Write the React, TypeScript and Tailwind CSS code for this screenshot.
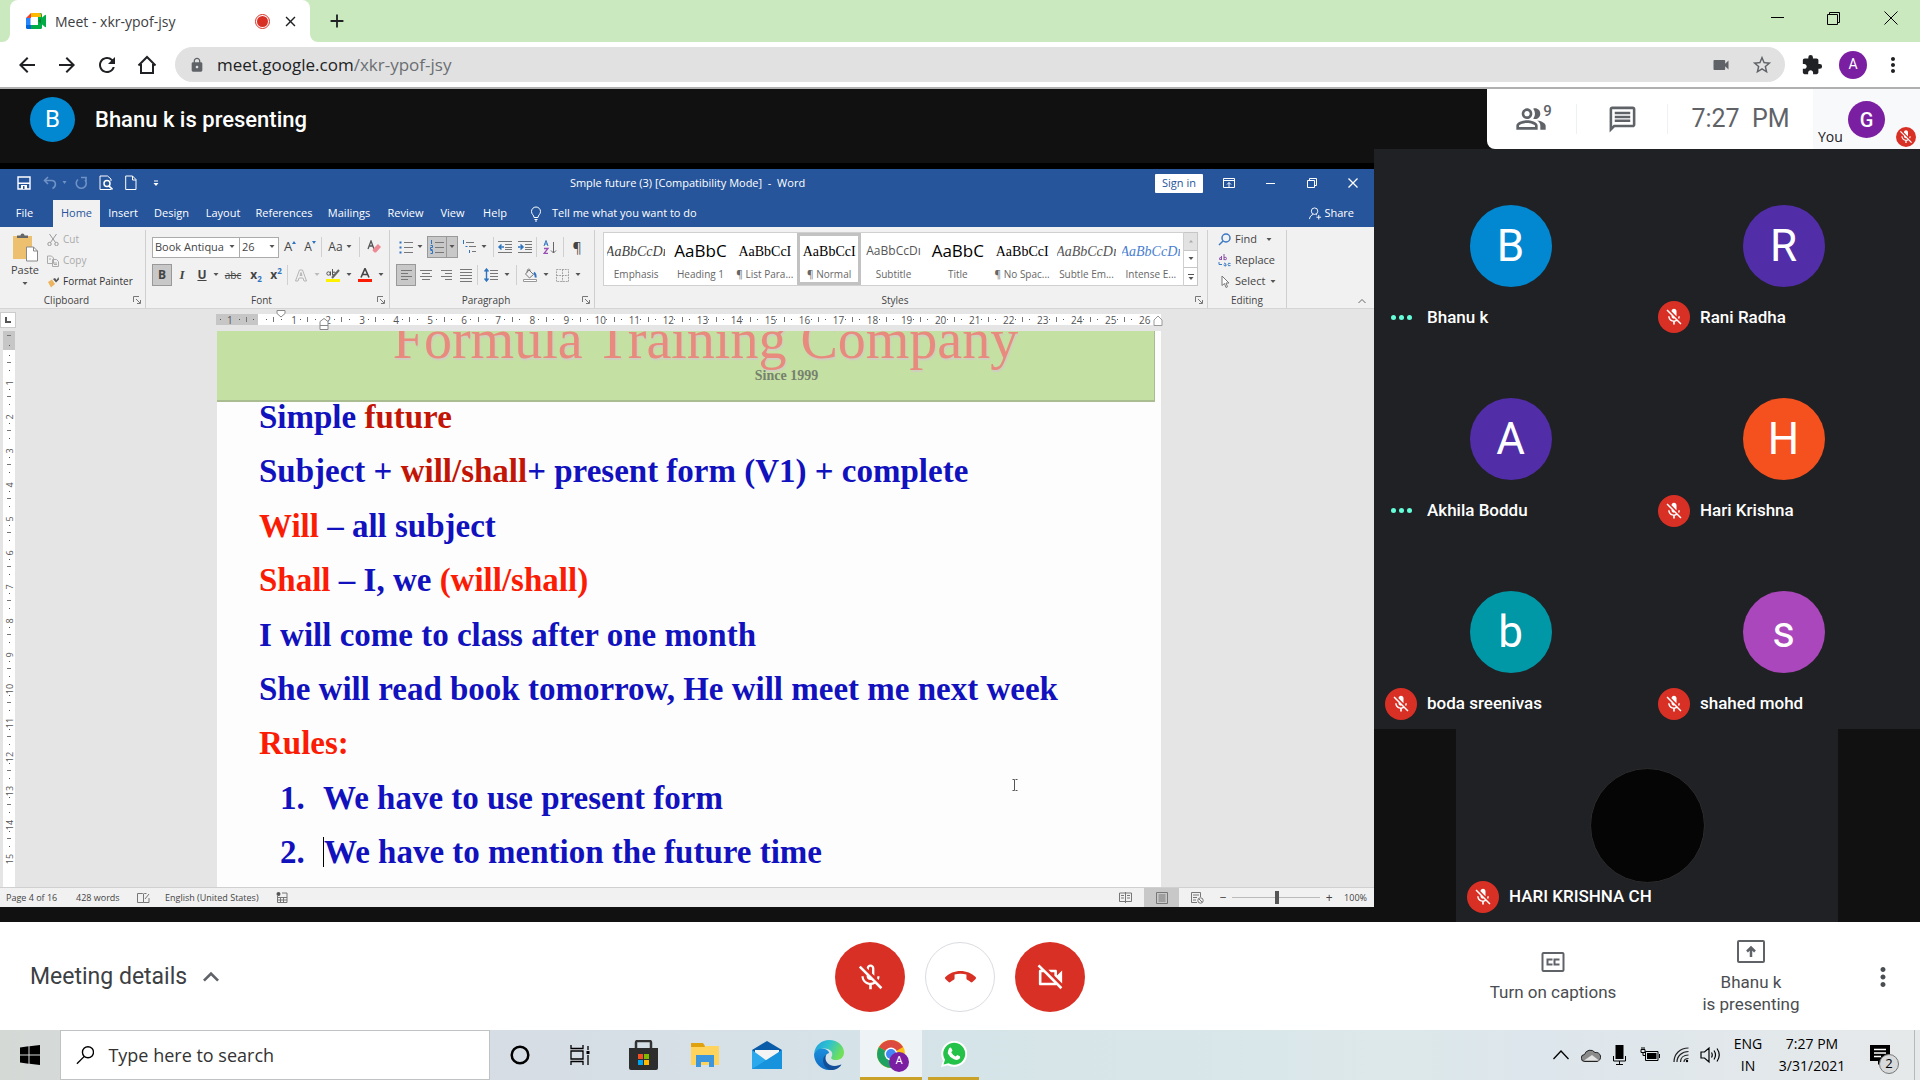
import React from "react";
import {
  MdArrowBack, MdArrowForward, MdRefresh, MdLock, MdVideocam, MdStarBorder, MdExtension, MdMoreVert, MdClose, MdAdd,
  MdOutlinePeopleAlt, MdOutlineMessage, MdMicOff, MdOutlineMicOff, MdCallEnd, MdOutlineVideocamOff, MdKeyboardArrowUp,
} from "react-icons/md";

const ui = "font-['Open_Sans','Noto_Sans',sans-serif]";
const roboto = "font-['Roboto',sans-serif]";

/* ---------- Browser ---------- */

function MeetLogo() {
  return (
    <svg viewBox="0 0 20 16" className="h-4 w-5">
      <path d="M5 0h10v4H5z" fill="#ffba00" />
      <path d="M5 0v5H0z" fill="#ea4335" />
      <path d="M0 5h4.500v7H0z" fill="#2684fc" />
      <path d="M0 12h5v4H1.500Q0 16 0 14.500z" fill="#0066da" />
      <path d="M5 12h10v4H5z" fill="#00ac47" />
      <path d="M13 0h1.500Q16 0 16 1.500V14.500Q16 16 14.500 16H13l-1-4V4z" fill="#00ac47" />
      <path d="M5 0h8q2 0 2 2v2H5z" fill="#ffba00" />
      <path d="M12 8l4-3.500v7z" fill="#00832d" />
      <path d="M15 5.500 19 2q1-.5 1 .5v11q0 1-1 .5l-4-3.500z" fill="#00ac47" />
      <path d="M5 4.500h7v7.500H5z" fill="#fff" />
    </svg>
  );
}

function Browser() {
  return (
    <header className={`${ui} shrink-0`}>
      <div className="flex h-[42px] items-end justify-between bg-[#cae9bf]">
        <div className="flex items-end">
          <div className="h-2 w-[10px] bg-white">
            <div className="size-full rounded-br-lg bg-[#cae9bf]" />
          </div>
          <div className="flex h-[42px] w-[300px] items-center rounded-t-lg bg-white pr-[11px] pl-4">
            <MeetLogo />
            <span className="ml-[9px] flex-1 text-[14px] whitespace-nowrap text-[#3c4043]">Meet - xkr-ypof-jsy</span>
            <span className="mr-[12px] flex size-[15px] items-center justify-center rounded-full border border-[#d93025]">
              <span className="size-[11px] rounded-full bg-[#d93025]" />
            </span>
            <button aria-label="Close tab"><MdClose className="size-[17px] text-[#202124]" /></button>
          </div>
          <div className="h-2 w-[10px] bg-white">
            <div className="size-full rounded-bl-lg bg-[#cae9bf]" />
          </div>
          <button aria-label="New tab" className="mb-[10px] ml-[6px]"><MdAdd className="size-[22px] text-[#202124]" /></button>
        </div>
        <div className="flex self-start">
          <button aria-label="Minimize" className="flex h-9 w-14 items-center justify-center"><svg viewBox="0 0 14 14" className="size-[14px]"><path d="M0 6.500h13" stroke="#000" /></svg></button>
          <button aria-label="Restore" className="flex h-9 w-14 items-center justify-center"><svg viewBox="0 0 14 14" className="size-[14px]" fill="none" stroke="#000"><path d="M.5 3.500h10v10H.5zM2.500 3.500v-2h10v10h-2" /></svg></button>
          <button aria-label="Close" className="flex h-9 w-[58px] items-center justify-center"><svg viewBox="0 0 14 14" className="size-[14px]"><path d="m.5.5 13 13m0-13-13 13" stroke="#000" /></svg></button>
        </div>
      </div>
      <div className="flex h-[47px] items-center border-b-2 border-[#b0b0b0] bg-white pr-[15px] pl-[15px] text-[#202124]">
        <button aria-label="Back" className="mr-4"><MdArrowBack className="size-6" /></button>
        <button aria-label="Forward" className="mr-4"><MdArrowForward className="size-6" /></button>
        <button aria-label="Reload" className="mr-4"><MdRefresh className="size-6" /></button>
        <button aria-label="Home" className="mr-4">
          <svg viewBox="0 0 24 24" className="size-6" fill="none" stroke="#202124" strokeWidth="2"><path d="M3.500 12.500 12 4l8.500 8.500M6 11v9h12v-9" /></svg>
        </button>
        <div className="flex h-[35px] flex-1 items-center rounded-full bg-[#e1e1e1] pr-3 pl-[14px]">
          <MdLock className="size-4 text-[#5f6368]" />
          <button className="ml-3 flex-1 text-left text-[17px] text-[#202124]">meet.google.com<span className="text-[#6b6f73]">/xkr-ypof-jsy</span></button>
          <MdVideocam className="mr-5 size-[20px] text-[#5f6368]" />
          <button aria-label="Bookmark"><MdStarBorder className="size-[22px] text-[#5f6368]" /></button>
        </div>
        <button aria-label="Extensions" className="ml-4"><MdExtension className="size-[22px]" /></button>
        <button className={`${roboto} ml-4 flex size-7 items-center justify-center rounded-full bg-[#7b1fa2] text-[14px] text-white`}>A</button>
        <button aria-label="Menu" className="ml-[14px]"><MdMoreVert className="size-6" /></button>
      </div>
    </header>
  );
}

/* ---------- Word: small drawings ---------- */

function Caret({ light }: { light?: boolean }) {
  return <svg viewBox="0 0 8 4" className="h-1 w-2 shrink-0"><path d="M1.500 0h5L4 3z" fill={light ? "#bbb" : "#555"} /></svg>;
}
function Launcher() {
  return <svg viewBox="0 0 8 8" className="size-2" fill="none" stroke="#777"><path d="M.5 6V.5H6M3 3l4 4M7.500 4v3.500H4" /></svg>;
}
function Sep() {
  return <span className="mx-[1px] h-5 w-px bg-[#d0d0d0]" />;
}
type LinesProps = { rows: string; blue?: React.ReactNode };
function Lines({ rows, blue }: LinesProps) {
  return <svg viewBox="0 0 14 14" className="h-[14px] w-[14px]" fill="none" stroke="#777"><path d={rows} />{blue}</svg>;
}
const iconBtn = "flex h-[22px] items-center justify-center";

const tabs = ["Insert", "Design", "Layout", "References", "Mailings", "Review", "View", "Help"];
const tabWidths = ["w-[46px]", "w-[51px]", "w-[52px]", "w-[70px]", "w-[60px]", "w-[53px]", "w-[41px]", "w-[44px]"];

function WordTitle() {
  return (
    <div className="bg-[#26559b] text-white">
      <div className="grid h-[31px] grid-cols-[1fr_auto_1fr] items-center pr-4 pb-[3px] pl-[17px]">
        <div className="flex items-center">
          <svg viewBox="0 0 14 14" className="size-[14px]"><path d="M1 1h12v12H1z" fill="none" stroke="#fff" strokeWidth="1.400" /><path d="M1 6.500h12V8H1z" fill="#fff" /><path d="M4 9h6v4H4z" fill="#fff" /><path d="M6 10h1.500v3H6z" fill="#26559b" /></svg>
          <svg viewBox="0 0 14 14" className="ml-3 size-[14px]" fill="none" stroke="#6f93c6" strokeWidth="1.600"><path d="M5 1 1.500 4.500 5 8M2 4.500h6.500c5 0 5 6 1 8" /></svg>
          <svg viewBox="0 0 8 4" className="ml-1 h-1 w-2"><path d="M1.500 0h4L3.500 3z" fill="#6f93c6" /></svg>
          <svg viewBox="0 0 14 14" className="ml-[6px] size-[14px]" fill="none" stroke="#6f93c6" strokeWidth="1.600"><path d="M3 3.500a5 5 0 1 0 7 .5M6 1.500h5v4" /></svg>
          <svg viewBox="0 0 14 16" className="ml-[10px] h-4 w-[14px]" fill="none" stroke="#fff"><path d="M12 14.500H1V1h7.500L12 4v2" /><circle cx="8" cy="8.500" r="3" strokeWidth="1.500" /><path d="m10 11 3.500 3.500" strokeWidth="1.700" /></svg>
          <svg viewBox="0 0 12 16" className="ml-3 h-4 w-3" fill="none" stroke="#fff"><path d="M.7 1h6.800L11 4.500v10H.7zM7.500 1v4H11" /></svg>
          <svg viewBox="0 0 8 8" className="ml-[15px] size-2"><path d="M2 2h4" stroke="#fff" /><path d="M1.500 4h5L4 7z" fill="#fff" /></svg>
        </div>
        <div className="text-[11px] whitespace-pre">Smple future (3) [Compatibility Mode]  -  Word</div>
        <div className="flex items-center justify-end">
          <button className="flex h-[19px] w-12 items-center justify-center rounded-[1px] bg-white text-[11px] text-[#26559b]">Sign in</button>
          <svg viewBox="0 0 12 12" className="ml-5 size-3" fill="none" stroke="#fff"><path d="M.5 1.500h11v9H.5zM.5 3.500h11M6 10V5.500M4 7.500l2-2 2 2" /></svg>
          <svg viewBox="0 0 10 10" className="ml-[31px] size-[10px]"><path d="M0 5.500h9" stroke="#fff" /></svg>
          <svg viewBox="0 0 10 10" className="ml-[31px] size-[10px]" fill="none" stroke="#fff"><path d="M.5 2.500h7v7h-7zM2.500 2.500v-2h7v7h-2" /></svg>
          <svg viewBox="0 0 10 10" className="ml-[31px] size-[10px]"><path d="m.5.5 9 9m0-9-9 9" stroke="#fff" strokeWidth="1.300" /></svg>
        </div>
      </div>
      <div className="flex h-[27px] items-center text-[11px]">
        <button className="w-[53px] pr-1">File</button>
        <button className="h-[27px] w-[47px] bg-[#f1f1f1] text-[#26559b]">Home</button>
        {tabs.map((t, i) => <button key={t} className={tabWidths[i]}>{t}</button>)}
        <svg viewBox="0 0 12 16" className="ml-[13px] h-4 w-3" fill="none" stroke="#fff"><path d="M4 11.500C4 9 1.500 8.500 1.500 5.500a4.500 4.500 0 0 1 9 0C10.500 8.500 8 9 8 11.500zM4.500 13.500h3M5 15h2" /></svg>
        <button className="ml-[10px]">Tell me what you want to do</button>
        <button className="mr-5 ml-auto flex items-center gap-[2px]">
          <svg viewBox="0 0 14 14" className="size-[13px]" fill="none" stroke="#fff"><circle cx="6" cy="4.500" r="3.500" /><path d="M.5 13C1 9.500 3 8.500 4.500 8M7.500 8l1 .5M10.500 8.500v5M8 11h5" /></svg>
          Share
        </button>
      </div>
    </div>
  );
}

type GroupProps = { name: string; className: string; inner?: string; launcher?: boolean; children: React.ReactNode };
function Group({ name, className, inner = "", launcher, children }: GroupProps) {
  return (
    <section className={`flex flex-col border-r border-[#cfcfcf] ${className}`}>
      <div className={`min-h-0 flex-1 ${inner}`}>{children}</div>
      <div className="flex h-4 items-center text-center text-[10px] text-[#444]">
        <span className="flex-1">{name}</span>
        {launcher && <span className="w-3"><Launcher /></span>}
      </div>
    </section>
  );
}

const serif = "font-['Liberation_Serif',serif]";
const styles = [
  { s: "AaBbCcDı", n: "Emphasis", c: `${serif} italic text-[14px]` },
  { s: "AaBbC", n: "Heading 1", c: "text-[17px] text-black" },
  { s: "AaBbCcI", n: "¶ List Para...", c: `${serif} text-[14px] text-black` },
  { s: "AaBbCcI", n: "¶ Normal", c: `${serif} text-[14px] text-black`, on: true },
  { s: "AaBbCcDı", n: "Subtitle", c: "text-[12px] text-[#555]" },
  { s: "AaBbC", n: "Title", c: "text-[17px] text-black" },
  { s: "AaBbCcI", n: "¶ No Spac...", c: `${serif} text-[14px] text-black` },
  { s: "AaBbCcDı", n: "Subtle Em...", c: `${serif} italic text-[14px] text-[#555]` },
  { s: "AaBbCcDı", n: "Intense E...", c: `${serif} italic text-[14px] text-[#4a7fd0]` },
];

function Ribbon() {
  return (
    <div className="flex h-[82px] border-b border-[#d5d5d5] bg-[#f1f1f1] pt-[3px] text-[11px] text-[#444]">
      <Group name="Clipboard" className="w-[146px]" launcher>
        <div className="flex pt-[3px]">
          <button className="flex w-[47px] flex-col items-center pl-[3px]">
            <svg viewBox="0 0 26 29" className="h-[29px] w-[26px]"><path d="M1 3h19v23H1z" fill="#ecc06f" /><path d="M5 5V2.500h3.500a2 2 0 0 1 4 0H16V5z" fill="#666" /><path d="M14.500 14h7l4 4v10h-11z" fill="#fff" stroke="#888" /><path d="M21.500 14v4h4" fill="none" stroke="#888" /></svg>
            <span className="leading-4">Paste</span>
            <span className="pt-1"><Caret /></span>
          </button>
          <div className="flex flex-col text-[10px] text-[#aaa]">
            <button className="flex h-[21px] items-center gap-1 pb-2">
              <svg viewBox="0 0 12 12" className="size-3" fill="none" stroke="#999"><path d="m2.500 0 6 8.500M9.500 0l-6 8.500" /><circle cx="2.500" cy="10" r="1.700" /><circle cx="9.500" cy="10" r="1.700" /></svg>Cut
            </button>
            <button className="flex h-[21px] items-center gap-1 pb-2">
              <svg viewBox="0 0 12 12" className="size-3" fill="none" stroke="#aaa"><path d="M.5 1h4l2 2v5.500h-6zM5.500 4.500h4l2 2v5h-6zM7 8h3M7 9.500h3M2 4h2" /></svg>Copy
            </button>
            <button className="flex h-[21px] items-center gap-1 pb-2 whitespace-nowrap text-[#333]">
              <svg viewBox="0 0 12 12" className="size-3"><path d="m1 6 4-2.500L8 8l-4 3.500z" fill="#ecb45f" /><path d="m6 3 2-1 1.500 2L11.500 1 12 3.500 9 6.500z" fill="#555" /></svg>Format Painter
            </button>
          </div>
        </div>
      </Group>
      <Group name="Font" className="w-[244px]" inner="pl-[6px]" launcher>
        <div className="flex flex-col gap-[6px] pt-[6px]">
          <div className="flex items-center">
            <div className="relative w-[88px]">
              <select aria-label="Font" className="h-[21px] w-full appearance-none border border-[#ababab] bg-white pl-[2px] text-[11px]"><option>Book Antiqua</option></select>
              <span className="pointer-events-none absolute top-2 right-1"><Caret /></span>
            </div>
            <div className="relative w-10">
              <select aria-label="Font size" className="-ml-px h-[21px] w-full appearance-none border border-[#ababab] bg-white pl-[2px] text-[11px]"><option>26</option></select>
              <span className="pointer-events-none absolute top-2 right-1"><Caret /></span>
            </div>
            <button className={`${iconBtn} w-5 text-[13px]`}>A<svg viewBox="0 0 4 4" className="mb-2 size-1"><path d="M0 3h4L2 0z" fill="#2f74c0" /></svg></button>
            <button className={`${iconBtn} w-5 text-[12px]`}>A<svg viewBox="0 0 4 4" className="mb-2 size-1"><path d="M0 0h4L2 3z" fill="#2f74c0" /></svg></button>
            <Sep />
            <button className={`${iconBtn} w-[35px] gap-[2px] text-[12px]`}>Aa<Caret /></button>
            <Sep />
            <button aria-label="Clear formatting" className={`${iconBtn} w-[26px]`}>
              <svg viewBox="0 0 14 14" className="size-[14px]"><path d="M1 9 4 1l3 8M2 6h4" fill="none" stroke="#555" strokeWidth="1.300" /><path d="m6 9 5-5 3 3-5 5.500H7.500L5.500 10.500z" fill="#ee8894" /></svg>
            </button>
          </div>
          <div className="flex items-center">
            <button className={`${iconBtn} w-5 border border-[#999] bg-[#c8c8c8] text-[12px] font-bold`}>B</button>
            <button className={`${iconBtn} ${serif} w-5 text-[13px] font-bold italic`}>I</button>
            <button className={`${iconBtn} w-5 text-[12px] font-bold underline`}>U</button>
            <Caret />
            <button className={`${iconBtn} w-[26px] text-[10px] line-through`}>abc</button>
            <button className={`${iconBtn} w-5 text-[12px] font-bold`}>x<span className="pt-2 text-[8px] text-[#2f74c0]">2</span></button>
            <button className={`${iconBtn} w-5 text-[12px] font-bold`}>x<span className="pb-2 text-[8px] text-[#2f74c0]">2</span></button>
            <Sep />
            <button aria-label="Text effects" className={`${iconBtn} w-6`}><svg viewBox="0 0 12 13" className="h-[13px] w-3" fill="none" stroke="#b5b5b5"><path d="M.5 12 4.500 1h3l4 11H9L8 9H4l-1 3zM5 6.500h2L6 3.500z" /></svg></button>
            <Caret light />
            <button aria-label="Highlight" className={`${iconBtn} w-6 flex-col`}>
              <svg viewBox="0 0 14 14" className="size-[14px]"><path d="M0 11h14v3H0z" fill="#fff200" /><circle cx="2.500" cy="5.500" r="1.700" fill="none" stroke="#555" /><path d="M4.500 3.500v4M6.500 1v6.500" stroke="#555" /><circle cx="8" cy="5.500" r="1.500" fill="none" stroke="#555" /><path d="m6 10 7-8" stroke="#666" strokeWidth="2" /></svg>
            </button>
            <Caret />
            <button aria-label="Font colour" className={`${iconBtn} w-6`}>
              <svg viewBox="0 0 14 14" className="size-[14px]"><path d="M0 11h14v3H0z" fill="#fa1c05" /><path d="m3 9.500 4-9 4 9M4.500 6.500h5" fill="none" stroke="#444" strokeWidth="1.600" /></svg>
            </button>
            <Caret />
          </div>
        </div>
      </Group>
      <Group name="Paragraph" className="w-[205px]" inner="pl-[6px]" launcher>
        <div className="flex flex-col gap-[6px] pt-[6px]">
          <div className="flex items-center">
            <button aria-label="Bullets" className={`${iconBtn} w-5`}><Lines rows="M5 2.500h9M5 7.500h9M5 12.500h9" blue={<path d="M.5 2.500h2M.5 7.500h2M.5 12.500h2" stroke="#2f74c0" strokeWidth="2" />} /></button>
            <Caret />
            <button aria-label="Numbering" className={`${iconBtn} ml-[3px] w-5 border border-[#999] bg-[#c8c8c8]`}><Lines rows="M5 2.500h9M5 7.500h9M5 12.500h9" blue={<path d="M1.500 0v4M.5 5.500h2v2h-2v2h2M.5 10.500h2v3h-2" stroke="#2f74c0" />} /></button>
            <span className="flex h-[22px] w-[11px] items-center justify-center border border-l-0 border-[#999] bg-[#c8c8c8]"><Caret /></span>
            <button aria-label="Multilevel list" className={`${iconBtn} w-[22px]`}><Lines rows="M4 2.500h8M7 6.500h7M10 11.500h4" blue={<path d="M1.500 0v4M3.500 6.500h2M7.500 10v3" stroke="#2f74c0" />} /></button>
            <Caret />
            <span className="w-1" />
            <Sep />
            <button aria-label="Decrease indent" className={`${iconBtn} w-5`}><Lines rows="M0 1.500h14M7 4.500h7M7 7.500h7M7 9.500h7M0 12.500h14" blue={<path d="M6 7H1m2.500-2.500L1 7l2.500 2.500" stroke="#2f74c0" strokeWidth="1.500" />} /></button>
            <button aria-label="Increase indent" className={`${iconBtn} w-5`}><Lines rows="M0 1.500h14M7 4.500h7M7 7.500h7M7 9.500h7M0 12.500h14" blue={<path d="M0 7h5M2.500 4.500 5 7 2.500 9.500" stroke="#2f74c0" strokeWidth="1.500" />} /></button>
            <Sep />
            <button aria-label="Sort" className={`${iconBtn} w-6`}>
              <svg viewBox="0 0 14 14" className="size-[14px]" fill="none"><path d="m1 6 2-5.500L5 6M1.700 4h2.600" stroke="#2f74c0" /><path d="M1 8.500h4l-4 5h4" stroke="#9a4fb5" strokeWidth="1.300" /><path d="M10.500 2v11M8 10.500l2.500 2.500 2.500-2.500" stroke="#666" /></svg>
            </button>
            <Sep />
            <button className={`${iconBtn} w-6 text-[14px]`}>¶</button>
          </div>
          <div className="flex items-center">
            <button aria-label="Align left" className={`${iconBtn} w-5 border border-[#999] bg-[#c8c8c8]`}><Lines rows="M2 2.500h11M2 5.500h7M2 8.500h11M2 11.500h7" /></button>
            <button aria-label="Centre" className={`${iconBtn} w-5`}><Lines rows="M1 2.500h12M3 5.500h8M1 8.500h12M3 11.500h8" /></button>
            <button aria-label="Align right" className={`${iconBtn} w-5`}><Lines rows="M2 2.500h11M6 5.500h7M2 8.500h11M6 11.500h7" /></button>
            <button aria-label="Justify" className={`${iconBtn} w-5`}><Lines rows="M1 1.500h12M1 4.500h12M1 7.500h12M1 10.500h12M1 13.500h12" /></button>
            <Sep />
            <button aria-label="Line spacing" className={`${iconBtn} w-6`}><Lines rows="M6 2.500h8M6 5.500h8M6 8.500h8M6 11.500h8" blue={<path d="M2.500 1v12M.5 3.500l2-2.500 2 2.500M.5 10.500l2 2.500 2-2.500" stroke="#2f74c0" strokeWidth="1.400" />} /></button>
            <Caret />
            <span className="w-1" />
            <Sep />
            <button aria-label="Shading" className={`${iconBtn} w-6`}><svg viewBox="0 0 14 14" className="size-[14px]" fill="none"><path d="M.5 11.500h13v2H.5z" stroke="#999" fill="#fff" /><path d="m6 2 4.500 4.500L6.500 10 2.500 6z" stroke="#777" /><path d="M4 4.500c0-4 3-5 3-1.500" stroke="#777" /><path d="M11 4.500q2 2 1.500 5" stroke="#2f74c0" strokeWidth="2" /></svg></button>
            <Caret />
            <button aria-label="Borders" className={`${iconBtn} w-6`}><svg viewBox="0 0 14 14" className="size-[13px]" fill="none" stroke="#999"><path d="M.5.5h13v13H.5zM7 .5v13M.5 7h13" strokeDasharray="2 1" /></svg></button>
            <Caret />
          </div>
        </div>
      </Group>
      <Group name="Styles" className="w-[613px]" inner="pl-2" launcher>
        <div className="flex pt-[2px]">
          <div className="grid h-[54px] flex-1 grid-cols-9 border border-[#d0d0d0] bg-white">
            {styles.map((s) => (
              <button key={s.n} className={`flex flex-col items-center overflow-hidden border-[3px] ${s.on ? "border-[#c2c2c2]" : "border-transparent"}`}>
                <span className={`flex h-[30px] items-center whitespace-nowrap ${s.c}`}>{s.s}</span>
                <span className="text-[10px] leading-4 whitespace-nowrap text-[#666]">{s.n}</span>
              </button>
            ))}
          </div>
          <div className="mr-[9px] flex w-[14px] flex-col divide-y divide-[#c6c6c6] border border-l-0 border-[#c6c6c6] bg-white">
            <button aria-label="Scroll up" className="flex flex-1 items-center justify-center bg-[#e2e2e2]"><svg viewBox="0 0 8 4" className="h-1 w-2"><path d="M2 3.500h4L4 1z" fill="#aaa" /></svg></button>
            <button aria-label="Scroll down" className="flex flex-1 items-center justify-center"><Caret /></button>
            <button aria-label="More" className="flex flex-1 items-center justify-center"><svg viewBox="0 0 8 8" className="size-2"><path d="M1 1.500h6" stroke="#555" /><path d="M1.500 4h5L4 7z" fill="#555" /></svg></button>
          </div>
        </div>
      </Group>
      <Group name="Editing" className="w-[79px]" inner="pl-[10px]">
        <div className="flex flex-col pt-px">
          <button className="flex h-[21px] items-center gap-1 pb-1"><svg viewBox="0 0 13 13" className="size-[13px]" fill="none" stroke="#3b78c4" strokeWidth="1.500"><circle cx="8" cy="5" r="4" /><path d="M5 8 1 12" /></svg>Find<span className="ml-1"><Caret /></span></button>
          <button className="flex h-[21px] items-center gap-1 pb-1"><svg viewBox="0 0 13 13" className="size-[13px]" fill="none"><path d="M3.500 2v4M1 4.500q2.500-2 2.500 0T1 5M6 0v6M6 3.500q2.500-1 2.500 1T6 5.500" stroke="#8a4fa8" /><path d="M1 8v2.500h3M6 9q2.500 0 2 3-2.500 0-2-1.500M12.500 9.500q-2.500-1-2.500 1t2.500 1" stroke="#3b78c4" /></svg>Replace</button>
          <button className="flex h-[21px] items-center gap-1 pb-1"><svg viewBox="0 0 13 13" className="size-[13px]" fill="#fff" stroke="#777"><path d="M4 1v9.500l2.500-2 1.500 4 1.500-.7-1.500-3.800h3z" /></svg>Select<Caret /></button>
        </div>
      </Group>
      <div className="flex flex-1 items-end justify-end pr-2 pb-1">
        <button aria-label="Collapse ribbon"><svg viewBox="0 0 8 6" className="h-[6px] w-2" fill="none" stroke="#666"><path d="M.5 5 4 1.500 7.500 5" /></svg></button>
      </div>
    </div>
  );
}

/* ---------- Word: page ---------- */

const Dot = () => <i className="size-px bg-[#555]" />;

function Ruler() {
  const n = Array.from({ length: 26 }, (_, i) => i + 1);
  return (
    <div className="relative flex h-[11px] items-center text-[10px] leading-none text-[#555]">
      <div className="flex h-[11px] w-[42px] items-center justify-between bg-[#c6c6c6] px-1"><Dot /><span>1</span><Dot /><i className="h-[5px] w-px bg-[#777]" /><Dot /></div>
      <div className="flex h-[11px] flex-1 items-center bg-white pr-[10px] pl-2">
        {n.map((k) => (
          <span key={k} className="flex flex-1 items-center justify-between">
            <Dot /><i className="h-[5px] w-px bg-[#777]" /><Dot /><span className="w-3 text-center">{k}</span>
          </span>
        ))}
      </div>
      <svg viewBox="0 0 10 8" className="absolute -top-1 left-[60px] h-2 w-[10px]"><path d="M1 .5h8v3L5 7 1 3.500z" fill="#fff" stroke="#888" /></svg>
      <svg viewBox="0 0 10 12" className="absolute top-1 left-[103px] h-3 w-[10px]"><path d="M1 11.500v-8L5 .5l4 3v8zM1 7.500h8" fill="#fff" stroke="#888" /></svg>
      <svg viewBox="0 0 10 12" className="absolute top-0 -right-[2px] h-3 w-[10px]"><path d="M1 11.500V6l4-4 4 4v5.500z" fill="#fff" stroke="#999" /></svg>
    </div>
  );
}

function VRuler() {
  const n = Array.from({ length: 15 }, (_, i) => i + 1);
  return (
    <div className="ml-[3px] flex w-3 shrink-0 flex-col text-[9px] leading-none text-[#555]">
      <div className="flex h-[19px] flex-col items-center justify-around bg-[#c6c6c6]"><i className="h-px w-1 bg-[#777]" /><Dot /></div>
      <div className="flex flex-1 flex-col items-center bg-white pt-[5px] pb-[22px]">
        {n.map((k) => (
          <span key={k} className="flex flex-1 flex-col items-center justify-between">
            <Dot /><i className="h-px w-1 bg-[#777]" /><Dot />
            <span className="flex size-3 -rotate-90 items-center justify-center">{k}</span>
          </span>
        ))}
      </div>
    </div>
  );
}

const R = ({ children }: { children: React.ReactNode }) => <span className="text-[#fa1c05]">{children}</span>;
const D = ({ children }: { children: React.ReactNode }) => <span className="text-[#c21505]">{children}</span>;

function Doc() {
  return (
    <div className="flex flex-1 flex-col bg-[#e5e5e5]">
      <div className="flex h-[22px] items-center pb-px">
        <span className="flex size-4 items-center justify-center border border-[#ccc] bg-white"><svg viewBox="0 0 6 6" className="size-[6px]"><path d="M1 0v5h5" fill="none" stroke="#555" strokeWidth="2" /></svg></span>
        <div className="mr-[213px] ml-[200px] flex-1"><Ruler /></div>
      </div>
      <div className="flex flex-1">
        <VRuler />
        <article className={`${serif} mr-[213px] ml-[202px] flex flex-1 flex-col bg-[#fdfdfe]`}>
          <div className="mr-[6px] flex h-[71px] flex-col items-center overflow-hidden border-r border-b-2 border-[#a9bd90] bg-[#c4e0a2]">
            <div className="-mt-5 ml-10 text-[56px] leading-[56px] whitespace-nowrap text-[#e88a7d] [text-shadow:1px_2px_1px_#cfcfc0]">Formula Training Company</div>
            <div className="ml-[202px] text-[14px] leading-[18px] font-bold text-[#76816e]">Since 1999</div>
          </div>
          <div className="relative flex flex-1 flex-col justify-between pb-5 pl-[42px] text-[33px] leading-[30px] font-bold whitespace-nowrap text-[#1111bd]">
            <h1>Simple <D>future</D></h1>
            <p>Subject + <D>will/shall</D>+ present form (V1) + complete</p>
            <p><R>Will</R> – all subject</p>
            <p><R>Shall</R> – I, we <R>(will/shall)</R></p>
            <p>I will come to class after one month</p>
            <p>She will read book tomorrow, He will meet me next week</p>
            <p><R>Rules:</R></p>
            <p className="flex pl-[21px]"><span className="w-[43px]">1.</span>We have to use present form</p>
            <p className="flex pl-[21px]"><span className="w-[43px]">2.</span><span className="border-l border-black">We have to mention the future time</span></p>
            <svg viewBox="0 0 6 12" className="absolute bottom-[96px] left-[795px] h-3 w-[6px]" fill="none" stroke="#555"><path d="M.5.5h2v11h-2M5.500.5h-2M5.500 11.500h-2" /></svg>
          </div>
        </article>
      </div>
    </div>
  );
}

function StatusBar() {
  return (
    <div className="flex h-5 items-center border-t border-[#d0d0d0] bg-[#f1f1f1] pr-[7px] pl-[6px] text-[9px] text-[#444]">
      <span className="w-[70px]">Page 4 of 16</span>
      <span className="w-[61px]">428 words</span>
      <svg viewBox="0 0 13 11" className="h-[11px] w-[13px]" fill="none" stroke="#777"><path d="M6.500 2v8.500H.5v-9h5zM6.500 2l1-.5h2M6.500 10.500h5.500V6M8 7l4-5" /></svg>
      <span className="ml-[15px] w-[111px] whitespace-nowrap">English (United States)</span>
      <svg viewBox="0 0 12 11" className="h-[11px] w-3" fill="none" stroke="#777"><path d="M1.500 4v6.500h9.500V1H6M1.500 5.500h9.500M4.500 5v5M7.500 5v5M1.500 8h9.500" /><circle cx="2.500" cy="2" r="2" fill="#555" stroke="none" /></svg>
      <div className="ml-auto flex items-center">
        <svg viewBox="0 0 13 11" className="mr-3 h-[11px] w-[13px]" fill="none" stroke="#777"><path d="M.5 1h12v8.500H.5zM6.500 0v11M2 3.500h3M2 6h3M8 3.500h3M8 6h3" /></svg>
        <span className="flex h-[19px] w-[35px] items-center justify-center bg-[#c8c8c8]"><svg viewBox="0 0 12 12" className="size-3" fill="none" stroke="#777"><path d="M.5.5h11v11H.5zM2.500 3h7M2.500 5h7M2.500 7h7M2.500 9h7" /></svg></span>
        <svg viewBox="0 0 13 12" className="ml-3 h-3 w-[13px]" fill="none" stroke="#777"><path d="M6 10.500H.5V.5h9V5M2 3h6M2 5.500h4M2 8h3" /><circle cx="9.500" cy="8.500" r="2.700" /><path d="m8 7 3 3" /></svg>
        <button aria-label="Zoom out" className="ml-[15px] w-2 text-[12px] leading-none">−</button>
        <input type="range" aria-label="Zoom" min={0} max={200} defaultValue={101} className="mx-[5px] h-[14px] w-[88px] appearance-none bg-transparent bg-[linear-gradient(#bbb,#bbb)] bg-[length:100%_1px] bg-center bg-no-repeat [&::-webkit-slider-thumb]:h-[13px] [&::-webkit-slider-thumb]:w-1 [&::-webkit-slider-thumb]:appearance-none [&::-webkit-slider-thumb]:bg-[#555]" />
        <button aria-label="Zoom in" className="w-2 text-[12px] leading-none">+</button>
        <span className="ml-[11px]">100%</span>
      </div>
    </div>
  );
}

/* ---------- Meet ---------- */

const people = [
  { n: "Bhanu k", l: "B", c: "bg-[#0288d1]", talk: true },
  { n: "Rani Radha", l: "R", c: "bg-[#512da8]" },
  { n: "Akhila Boddu", l: "A", c: "bg-[#512da8]", talk: true },
  { n: "Hari Krishna", l: "H", c: "bg-[#f4511e]" },
  { n: "boda sreenivas", l: "b", c: "bg-[#0097a7]" },
  { n: "shahed mohd", l: "s", c: "bg-[#ab47bc]" },
];

function NameTag({ name, talk }: { name: string; talk?: boolean }) {
  return (
    <div className="absolute bottom-[9px] left-[11px] flex items-center gap-[10px] text-[17px] font-medium whitespace-nowrap text-white">
      {talk ? (
        <span className="flex size-8 items-center justify-center gap-[3px]"><i className="size-[5px] rounded-full bg-[#64ffda]" /><i className="size-[5px] rounded-full bg-[#64ffda]" /><i className="size-[5px] rounded-full bg-[#64ffda]" /></span>
      ) : (
        <span className="flex size-8 items-center justify-center rounded-full bg-[#d93025]"><MdMicOff className="size-5" /></span>
      )}
      {name}
    </div>
  );
}

function Participants() {
  return (
    <aside className="grid w-[546px] grid-cols-2 grid-rows-4 bg-[#111]">
      {people.map((p) => (
        <div key={p.n} className="relative flex items-center justify-center bg-[#202124]">
          <span className={`flex size-[82px] items-center justify-center rounded-full text-[44px] text-white ${p.c}`}>{p.l}</span>
          <NameTag name={p.n} talk={p.talk} />
        </div>
      ))}
      <div className="relative col-span-2 mx-auto flex w-[382px] items-center justify-center bg-[#202124]">
        <span className="size-[115px] rounded-full border border-[#2c2c2e] bg-[#050505]" />
        <NameTag name="HARI KRISHNA CH" />
      </div>
    </aside>
  );
}

function Meet() {
  return (
    <main className={`${roboto} flex flex-1 flex-col bg-[#111]`}>
      <div className="flex h-[60px] items-center justify-between">
        <div className="flex items-center pl-[30px] text-white">
          <span className="flex size-[45px] items-center justify-center rounded-full bg-[#0288d1] text-[24px]">B</span>
          <h2 className="ml-5 text-[22px] font-medium">Bhanu k is presenting</h2>
        </div>
        <div className="flex h-[60px] w-[433px] items-center rounded-bl-lg bg-white text-[#5f6368]">
          <button aria-label="Participants" className="flex h-[30px] w-[90px] items-center justify-center border-r border-[#eef0f1] pl-1">
            <MdOutlinePeopleAlt className="size-[32px]" /><span className="-ml-[4px] pb-4 text-[15px] font-medium">9</span>
          </button>
          <button aria-label="Chat" className="flex h-[30px] w-[91px] items-center justify-center border-r border-[#eef0f1]"><MdOutlineMessage className="size-[31px]" /></button>
          <time className="flex-1 text-center text-[25px] whitespace-pre">7:27  PM</time>
          <div className="relative h-[60px] w-[107px] bg-[#f8f9fb]">
            <span className={`${ui} absolute bottom-[2px] left-[5px] text-[14px] text-[#202124]`}>You</span>
            <span className="absolute top-[12px] left-[35px] flex size-[37px] items-center justify-center rounded-full bg-[#7b1fa2] text-[20px] font-medium text-white">G</span>
            <span className="absolute right-1 bottom-[2px] flex size-5 items-center justify-center rounded-full bg-[#d93025] text-white"><MdMicOff className="size-4" /></span>
          </div>
        </div>
      </div>
      <div className="flex flex-1">
        <div className="flex flex-1 flex-col pt-[14px] pb-[15px]">
          <div className="h-[6px] bg-black" />
          <div className={`${ui} flex flex-1 flex-col`}>
            <WordTitle />
            <Ribbon />
            <Doc />
            <StatusBar />
          </div>
        </div>
        <Participants />
      </div>
    </main>
  );
}

function Controls() {
  const round = "flex size-[70px] items-center justify-center rounded-full";
  return (
    <div className={`${roboto} grid h-[108px] shrink-0 grid-cols-[1fr_auto_1fr] items-center bg-white pt-[2px]`}>
      <button className="ml-[30px] flex items-center gap-2 text-[23px] text-[#3c4043]">Meeting details<MdKeyboardArrowUp className="size-8 text-[#5f6368]" /></button>
      <div className="flex gap-5">
        <button aria-label="Unmute" className={`${round} bg-[#d93025] text-white`}><MdOutlineMicOff className="size-[31px]" /></button>
        <button aria-label="Leave call" className={`${round} border border-[#dadce0] text-[#d93025]`}><MdCallEnd className="size-[31px]" /></button>
        <button aria-label="Turn on camera" className={`${round} bg-[#d93025] text-white`}><MdOutlineVideocamOff className="size-[31px]" /></button>
      </div>
      <div className="flex items-center justify-end text-[17px] leading-[22px] text-[#4a4d51]">
        <button className="flex w-[180px] flex-col items-center gap-2">
          <svg viewBox="0 0 24 22" className="h-[22px] w-6" fill="none" stroke="#5f6368" strokeWidth="2"><rect x="1.500" y="2" width="21" height="18" rx="1" /><path d="M10.500 9.500V8.500h-4v5h4v-1M17.500 9.500V8.500h-4v5h4v-1" /></svg>
          Turn on captions
        </button>
        <button className="ml-[18px] flex w-[180px] flex-col items-center gap-2">
          <svg viewBox="0 0 28 23" className="h-[23px] w-7" fill="none" stroke="#5f6368" strokeWidth="2"><rect x="1" y="1" width="26" height="21" rx="1" /><path d="M14 17V8M10 11.500 14 7.500l4 4" strokeWidth="2.500" /></svg>
          <span>Bhanu k<br />is presenting</span>
        </button>
        <button aria-label="More options" className="mr-[22px] ml-[27px]"><MdMoreVert className="size-[30px]" /></button>
      </div>
    </div>
  );
}

/* ---------- Taskbar ---------- */

function Taskbar() {
  const slot = "flex h-[50px] w-[62px] items-center justify-center";
  return (
    <footer className={`${ui} flex h-[50px] shrink-0 items-center bg-[linear-gradient(90deg,#d5d9d6,#d6dde5_28%,#d5e4e8_50%,#dce8ea_72%,#dde6ec_80%,#e6e9ea)] text-black`}>
      <button aria-label="Start" className="flex w-[60px] items-center justify-center"><svg viewBox="0 0 20 20" className="size-5"><path d="M0 2.500 8.500 1.300v8.200H0zM9.500 1.200 20 0v9.500H9.500zM0 10.500h8.500v8.200L0 17.500zM9.500 10.500H20V20L9.500 18.700z" /></svg></button>
      <div className="flex h-[50px] w-[430px] items-center border border-[#bfc3c4] bg-white pl-[15px]">
        <svg viewBox="0 0 20 20" className="size-5" fill="none" stroke="#000" strokeWidth="1.500"><circle cx="13" cy="7" r="6" /><path d="m9 11.500-8 8" /></svg>
        <input aria-label="Search" placeholder="Type here to search" className="ml-[14px] w-full text-[18px] outline-none placeholder:text-[#333]" />
      </div>
      <button aria-label="Cortana" className="flex h-[50px] w-[60px] items-center justify-center"><svg viewBox="0 0 20 20" className="size-5" fill="none" stroke="#000" strokeWidth="2.500"><circle cx="10" cy="10" r="8.300" /></svg></button>
      <button aria-label="Task view" className="mr-[2px] flex h-[50px] w-[60px] items-center justify-center"><svg viewBox="0 0 20 20" className="size-5" fill="none" stroke="#000" strokeWidth="1.300"><path d="M1 6h12v8H1zM1 0v3.500h12V0M1 20v-3.500h12V20M18 1v4M18 10v10" /><path d="M16.500 6h3v3h-3z" fill="#000" stroke="none" /></svg></button>
      <button aria-label="Store" className={slot}><svg viewBox="0 0 29 30" className="h-[30px] w-[29px]"><path d="M7 9V2.500Q7 1 8.500 1h12Q22 1 22 2.500V9" fill="none" stroke="#333" strokeWidth="2.500" /><path d="M0 8h29v20q0 2-2 2H2q-2 0-2-2z" fill="#2d2d2d" /><path d="M9 14h5v5H9z" fill="#f25022" /><path d="M15 14h5v5h-5z" fill="#7fba00" /><path d="M9 20h5v5H9z" fill="#00a4ef" /><path d="M15 20h5v5h-5z" fill="#ffb900" /></svg></button>
      <button aria-label="File Explorer" className={slot}><svg viewBox="0 0 28 24" className="h-6 w-7"><path d="M0 0h12l2 3v6H0z" fill="#dfa10e" /><path d="M0 4h13l2-1h13v19H0z" fill="#ffd35c" /><path d="M5 12h18v12h-5v-5h-8v5H5z" fill="#3b96dd" /></svg></button>
      <button aria-label="Mail" className={slot}><svg viewBox="0 0 30 28" className="h-7 w-[30px]"><path d="M0 9 15 0l15 9v6H0z" fill="#0a5ba8" /><path d="M3 9h24v8L15 22 3 17z" fill="#f4f4f4" /><path d="M0 9 15 20 30 9v19H0z" fill="#2ba9ec" /><path d="M0 28 30 9v19z" fill="#1792dc" /></svg></button>
      <button aria-label="Edge" className={slot}>
        <svg viewBox="0 0 30 30" className="size-[30px]">
          <defs>
            <linearGradient id="e1" x1="0" y1="0" x2="1" y2=".4"><stop offset="0" stopColor="#1f9be0" /><stop offset=".5" stopColor="#2fc1cf" /><stop offset="1" stopColor="#6fe05a" /></linearGradient>
            <linearGradient id="e2" x1="0" y1="0" x2="0" y2="1"><stop offset="0" stopColor="#1b8fdd" /><stop offset="1" stopColor="#0f69c0" /></linearGradient>
          </defs>
          <path d="M0 14C1 5 8 0 15 0c9 0 15 6 15 12.500 0 5-4 7.500-8 7.500s-5.500-1.500-4.500-3c2.500-4-1-8.500-7-8.500C5 8.500 1 11 0 14z" fill="url(#e1)" />
          <path d="M0 14c2-5 7-6.500 11-5 3 1 4 3 4 4-4 1-5 5-4 9 1 4 4 7 8 7.500C9 32 0 24 0 14z" fill="url(#e2)" />
          <path d="M12.500 14.500c-3 5 1 11.500 8 11.500 3 0 6-1.500 7-1.500-3 5-8 6-12 5.300-6.500-2-9-12-3-15.300z" fill="#124f98" />
        </svg>
      </button>
      <button aria-label="Chrome" className={`${slot} border-b-[3px] border-[#c9a227] bg-[#eef4f5]`}>
        <span className="relative">
          <svg viewBox="0 0 28 28" className="size-7"><circle cx="14" cy="14" r="14" fill="#fbc116" /><path d="M14 14 1.900 7A14 14 0 0 1 26.100 7z" fill="#dd4b3e" /><path d="M14 14 1.900 7A14 14 0 0 0 14 28l6-10.500z" fill="#1da261" /><circle cx="14" cy="14" r="6.500" fill="#fff" /><circle cx="14" cy="14" r="5" fill="#4285f4" /></svg>
          <span className={`${roboto} absolute -right-[4px] -bottom-[4px] flex size-5 items-center justify-center rounded-full bg-[#7b1fa2] text-[11px] text-white`}>A</span>
        </span>
      </button>
      <button aria-label="WhatsApp" className="ml-[6px] flex h-[50px] w-[51px] items-center justify-center border-b-[3px] border-[#c9a227]">
        <svg viewBox="0 0 26 26" className="size-[26px]"><path d="M0 26 2 19.500A13 13 0 1 1 6.800 24.200z" fill="#fff" /><path d="M2.500 23.500 4 18.800A11 11 0 1 1 7.500 22.200z" fill="#25c24a" /><path d="M8 7.500q1.500-2 2.500 0l1 2.200-1.300 1.600q1.500 3 4.500 4.200l1.600-1.500 2.500 1.300q1 .7-.3 2.500-2 2-5.500.5-4.500-2-6.300-6Q7 9.500 8 7.500z" fill="#fff" /></svg>
      </button>
      <div className="ml-auto flex items-center">
        <svg viewBox="0 0 16 10" className="h-[10px] w-4" fill="none" stroke="#000" strokeWidth="1.300"><path d="m.5 9 7.500-8 7.500 8" /></svg>
        <svg viewBox="0 0 20 14" className="ml-3 h-[14px] w-5"><path d="M4 13.500a3.500 3.500 0 0 1-.5-7A6 6 0 0 1 14 4.500a4.500 4.500 0 0 1 2 9z" fill="#8b8b8b" stroke="#222" /><path d="m3 12.500 8-5.500 7 5.500z" fill="#e3e3e3" /></svg>
        <svg viewBox="0 0 13 20" className="ml-3 h-5 w-[13px]" fill="none" stroke="#000"><path d="M2.500 0h8v14h-8z" fill="#000" stroke="none" /><path d="M.5 11v5h12v-5M6.500 16v3.500M3 19.500h7" /></svg>
        <svg viewBox="0 0 20 16" className="ml-[14px] h-4 w-5" fill="none" stroke="#000"><path d="M5.500 4.500H18v9H5.500z" /><path d="M7 6h9.500v6H7z" fill="#000" stroke="none" /><path d="M19.500 7v4M1 2.500h4v3H1zM2 0v2M4 0v2M3 5.500v3h2.500" /></svg>
        <svg viewBox="0 0 16 16" className="ml-[13px] size-4" fill="none" stroke="#222" strokeWidth="1.200"><path d="M1 15C1 7 7 1 15.500 1M4 15C4 9 9 4.500 15.500 4.500M7.500 15c0-4 3-7 8-7M11 15c0-2 1.500-3.500 4.500-3.500" /><circle cx="14" cy="14" r="1.200" fill="#000" stroke="none" /></svg>
        <svg viewBox="0 0 21 18" className="ml-[11px] h-[18px] w-[21px]" fill="none" stroke="#000" strokeWidth="1.200"><path d="M1 6h3.500L9 2v14l-4.500-4H1zM11.500 6.500q1.500 2.500 0 5M14 4.500q3 4.500 0 9M17 2.500q4.500 6.500 0 13" /></svg>
        <div className="ml-3 w-[30px] text-center text-[14px] leading-[22px]">ENG<br />IN</div>
        <time className="ml-[13px] w-[72px] text-center text-[14px] leading-[22px] whitespace-nowrap">7:27 PM<br />3/31/2021</time>
        <div className="relative ml-[22px]">
          <svg viewBox="0 0 20 20" className="h-5 w-5"><path d="M0 0h20v16h-8l-4 4v-4H0z" /><path d="M4 4.500h12M4 8h12M4 11.500h7" stroke="#fff" strokeWidth="1.300" /></svg>
          <span className="absolute -right-[9px] -bottom-[9px] flex size-5 items-center justify-center rounded-full border border-[#777] bg-[#d7d9da] text-[13px]">2</span>
        </div>
        <span className="mr-[5px] ml-[24px] h-[50px] w-px bg-[#b5b9ba]" />
      </div>
    </footer>
  );
}

export default function App() {
  return (
    <div className="flex min-h-screen flex-col">
      <Browser />
      <Meet />
      <Controls />
      <Taskbar />
    </div>
  );
}
